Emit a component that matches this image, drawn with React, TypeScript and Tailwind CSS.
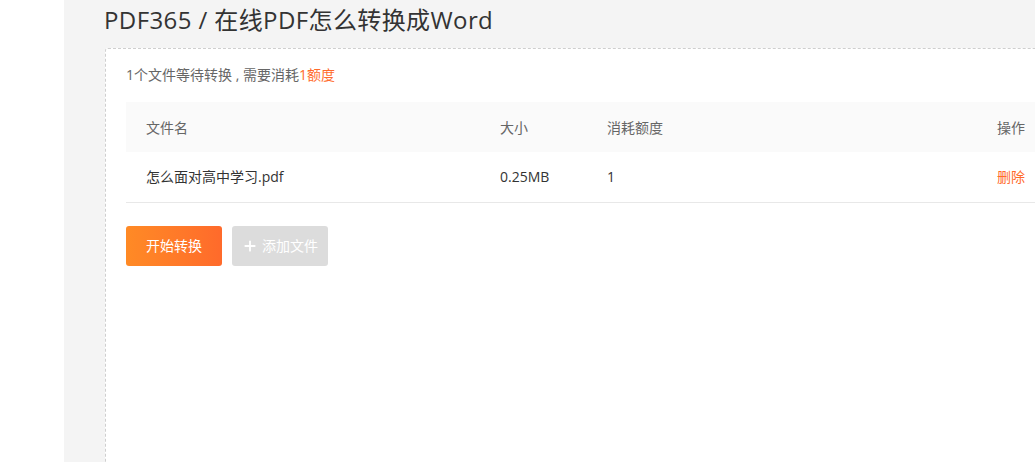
import { Plus } from 'lucide-react'

const font = "font-['Open_Sans','Noto_Sans_CJK_SC',sans-serif]"

function App() {
  return (
    <div className={`flex h-[462px] w-[1035px] overflow-hidden bg-white ${font}`}>
      <div className="w-16 shrink-0 bg-white" />
      <div className="flex-1 bg-[#f4f4f4] pl-[41px]">
        <h1 className="ml-[-1px] h-12 pt-[3px] text-[24px] leading-[34px] tracking-[0.4px] text-[#333]">PDF365 / 在线PDF怎么转换成Word</h1>
        <div className="h-[480px] w-[960px] rounded-[3px] border border-dashed border-[#cfcfcf] bg-white px-5 pt-[16px]">
          <p className="text-[14px] leading-5 text-[#666]">
            1个文件等待转换 , 需要消耗<span className="text-[#ff6a2b]">1额度</span>
          </p>
          <table className="mt-[17px] w-full text-[14px]">
            <thead>
              <tr className="h-[50px] bg-[#fafafa] text-left text-[#666]">
                <th className="w-[374px] pl-5 font-normal">文件名</th>
                <th className="w-[107px] font-normal">大小</th>
                <th className="font-normal">消耗额度</th>
                <th className="pr-[19px] text-right font-normal">操作</th>
              </tr>
            </thead>
            <tbody>
              <tr className="h-[50px] border-b border-[#e8e8e8] text-[#333]">
                <td className="pl-5">怎么面对高中学习.pdf</td>
                <td>0.25MB</td>
                <td>1</td>
                <td className="pr-[19px] text-right text-[#ff6a2b]">删除</td>
              </tr>
            </tbody>
          </table>
          <div className="mt-[23px] flex gap-2.5">
            <button className="h-10 w-24 rounded-[3px] bg-gradient-to-r from-[#ff8a25] to-[#ff6a2b] text-[14px] text-white">开始转换</button>
            <button className="flex h-10 w-24 items-center justify-center gap-1 rounded-[3px] bg-[#dcdcdc] text-[14px] text-white">
              <Plus size={16} strokeWidth={2.75} />添加文件
            </button>
          </div>
        </div>
      </div>
    </div>
  )
}

export default App
